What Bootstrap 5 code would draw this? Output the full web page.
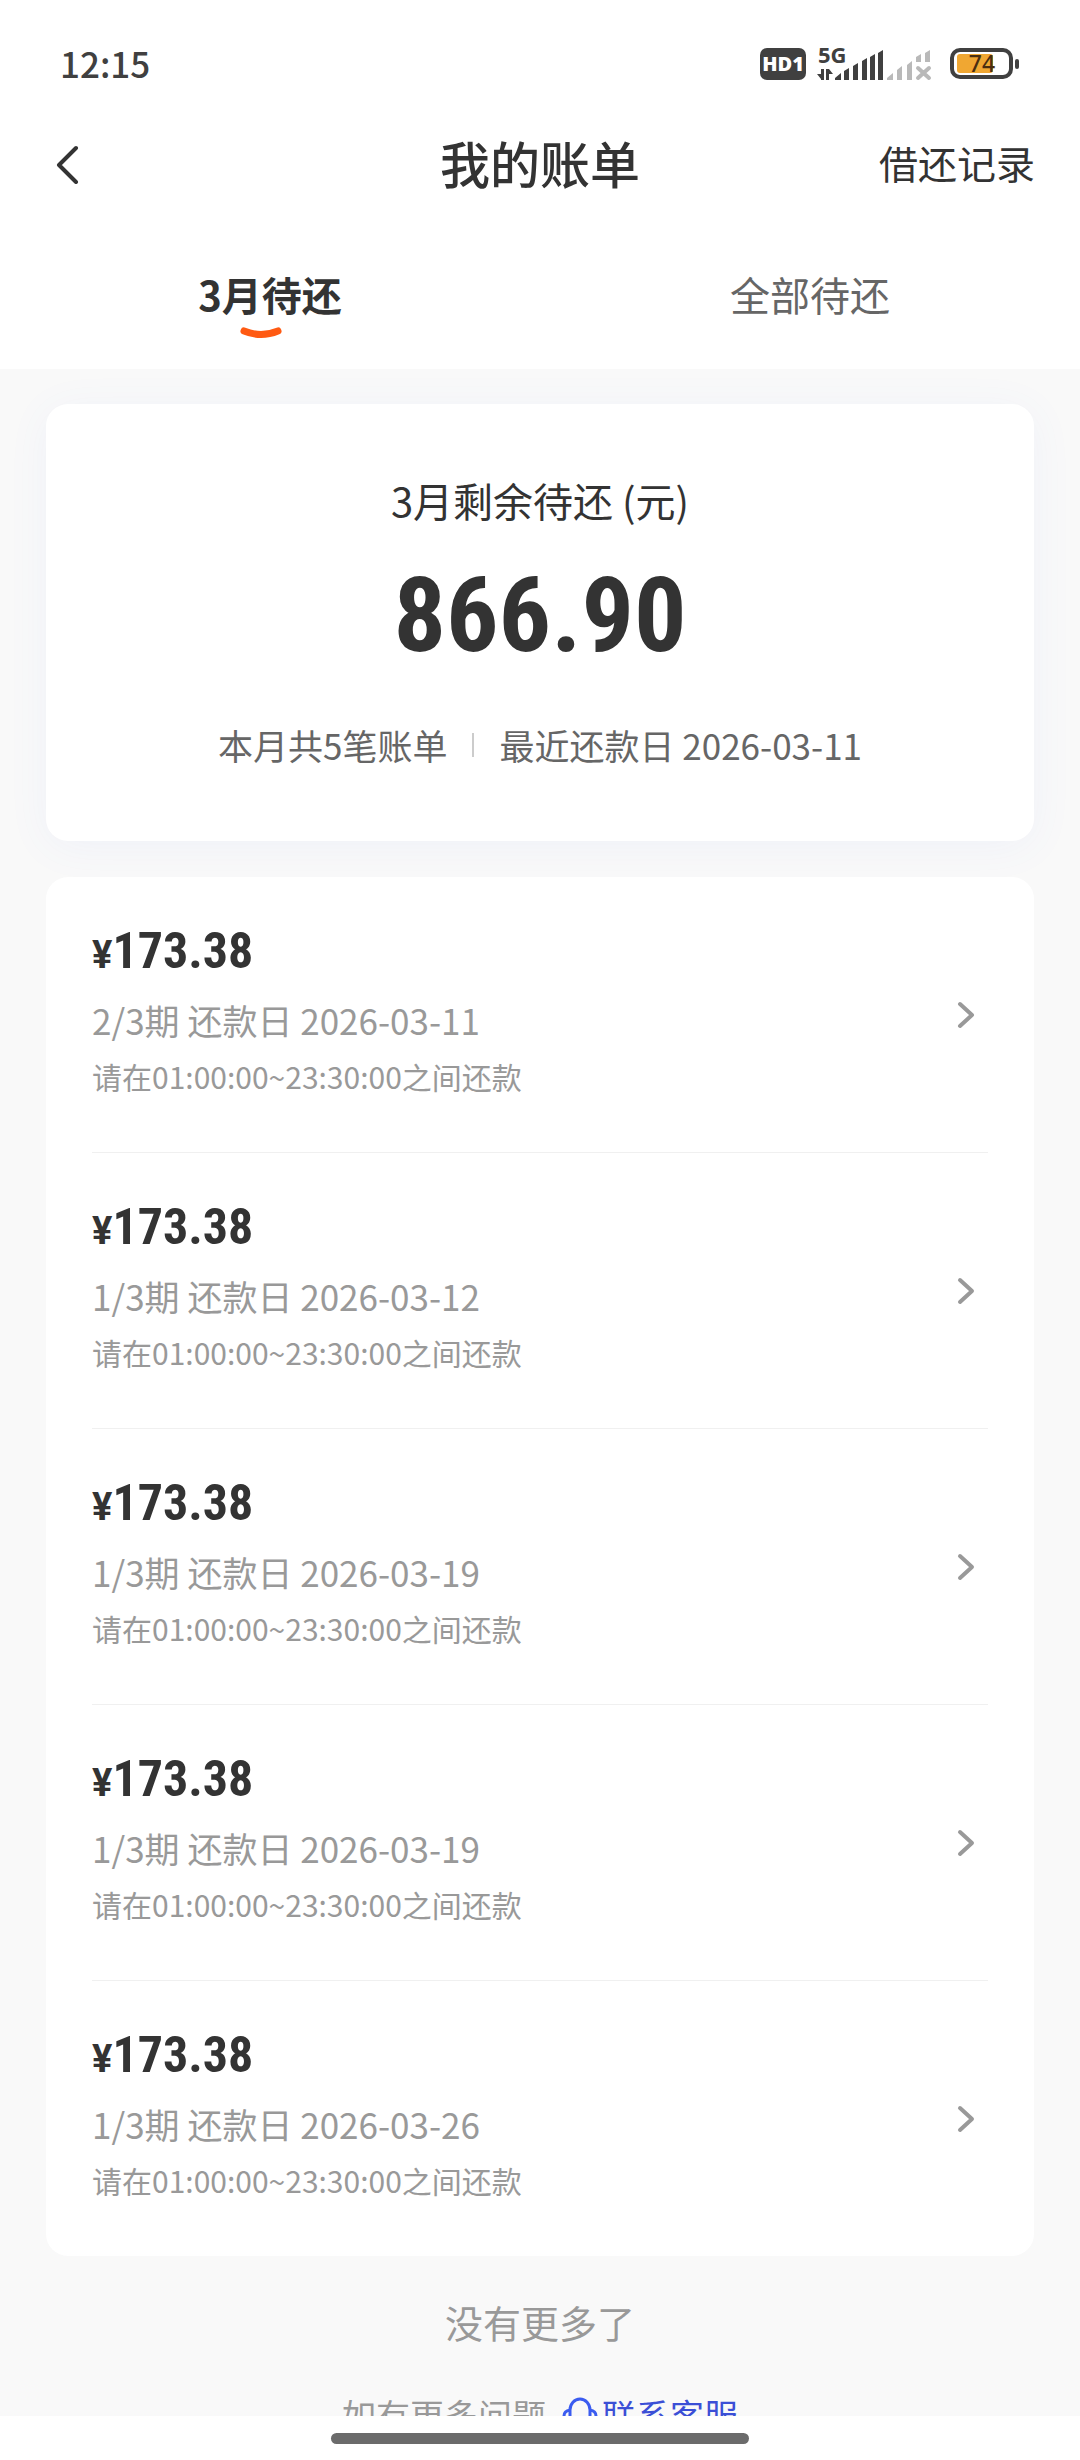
<!DOCTYPE html>
<html lang="zh-CN">
<head>
<meta charset="utf-8">
<meta name="viewport" content="width=device-width, initial-scale=1">
<title>我的账单</title>
<link href="https://cdn.jsdelivr.net/npm/bootstrap@5.3.0/dist/css/bootstrap.min.css" rel="stylesheet">
<style>
  body { font-family: "Noto Sans CJK SC", "Noto Sans", sans-serif; color: #333; background: #fff; }
  .screen { height: 100vh; }
  .text-main { color: #333; }
  .text-mid { color: #666; }
  .text-soft { color: #999; }
  .fs-title { font-size: 50px; line-height: 60px; font-weight: 500; }
  .fs-head { font-size: 40px; line-height: 60px; }
  .fs-info { font-size: 35px; line-height: 50px; }
  .fs-note { font-size: 30px; line-height: 44px; }

  .status-bar { height: 114px; padding: 14px 60px 0; }
  .clock { font-size: 35px; line-height: 50px; font-weight: 500; color: #404040; padding-bottom: 3px; }
  .status-icons { gap: 10px; }
  .status-icons svg { overflow: visible; }
  .title-bar { height: 100px; padding: 0 45px 4px; }
  .title-bar > * { flex: 1 1 0; }
  .title-bar .record-link { font-size: 39px; }
  .tab-row { padding: 50px 0 30px; }
  .tab-btn { height: 75px; background: none; border: 0; padding: 0; }
  .tab-btn svg { margin: 3px 18px 0 0; flex-shrink: 0; }

  .bill-area { background: #f9f9f9; min-height: 0; padding: 35px 46px 0; }
  .panel { background: #fff; border-radius: 22px; }
  .summary { padding: 66px 0 71px; box-shadow: 0 6px 44px rgba(90, 120, 230, .06); }
  .figures { font-family: "Roboto Condensed", "Roboto", sans-serif; font-weight: 700; }
  .total { font-size: 104px; line-height: 120px; margin: 26px 0 44px; }
  .info-split { width: 2px; height: 24px; background: #ccc; margin: 0 25px; }
  .bills { margin-top: 36px; padding: 0 46px; }
  .bill { border-color: #f0f0f0 !important; }
  .bill-text { padding: 44px 0 54px; }
  .amount { font-size: 50px; line-height: 60px; }
  .yuan { font-family: "Roboto", sans-serif; font-size: 38px; line-height: 1; }
  .due { margin: 14px 0 9px; }
  .bill svg { margin-right: 13px; }
  .no-more { font-size: 38px; line-height: 50px; margin: 41px 0 43px; }
  .help-line { font-size: 34px; line-height: 50px; }
  .service { color: #3b4fd6; }
  .home-bar { height: 44px; }
  .home-bar span { width: 418px; height: 11px; background: #6b6b6b; }
</style>
<script src="https://cdn.jsdelivr.net/npm/bootstrap@5.3.0/dist/js/bootstrap.bundle.min.js"></script>
</head>
<body>
<div class="screen d-flex flex-column overflow-hidden">
  <header class="flex-shrink-0">
    <div class="status-bar d-flex align-items-center justify-content-between">
      <span class="clock">12:15</span>
      <div class="status-icons d-flex align-items-center">
        <svg width="46" height="32" viewBox="0 0 46 32" role="img" aria-label="HD1">
          <rect width="46" height="32" rx="7" fill="#404040"/>
          <text x="23" y="23" text-anchor="middle" font-family="Open Sans, sans-serif" font-weight="800" font-size="20" fill="#fff">HD1</text>
        </svg>
        <svg width="116" height="34" viewBox="0 0 116 34" role="img" aria-label="5G">
          <text x="2" y="16" font-family="Open Sans, sans-serif" font-weight="700" font-size="22" fill="#404040">5G</text>
          <g fill="#404040">
            <path d="M5 22h3v11H5zM1 27h4v5zM10 22h3v11h-3zM13 22l4 5h-4z"/>
            <path d="M19 33v-2l6-5v7zM28 33v-9l5-3v12zM37 33V19l5-3v17zM46 33V14l5-3v22zM54 33V10l5-3v26zM62 33V6l5-3v30z"/>
          </g>
          <g fill="#b9b9b9">
            <path d="M71 33v-2l6-5v7zM81 33V23l5-4v14zM91 33V18l5-4v19zM100 15v-5l5-3v8zM109 15V6l5-3v12z"/>
            <path d="M102 21l11 10M113 21l-11 10" stroke="#b9b9b9" stroke-width="4" stroke-linecap="round"/>
          </g>
        </svg>
        <svg class="ms-2" width="70" height="32" viewBox="0 0 70 32" role="img" aria-label="74">
          <rect x="2" y="2" width="59" height="27" rx="8" fill="none" stroke="#404040" stroke-width="4"/>
          <rect x="7" y="6" width="36" height="19" rx="3" fill="#f0a732"/>
          <rect x="65" y="11" width="4" height="10" rx="2" fill="#404040"/>
          <text x="32" y="24" text-anchor="middle" font-family="Noto Sans, sans-serif" font-weight="500" font-size="23" fill="#4a2e10">74</text>
        </svg>
      </div>
    </div>
    <div class="title-bar d-flex align-items-center">
      <div class="d-flex">
        <button type="button" class="btn p-0 border-0 d-flex" aria-label="返回">
          <svg width="42" height="44" viewBox="0 0 42 44" fill="none" stroke="#333" stroke-width="4" stroke-linecap="round" stroke-linejoin="round"><path d="M31 8L14 25L31 42"/></svg>
        </button>
      </div>
      <h1 class="fs-title text-center text-nowrap m-0">我的账单</h1>
      <div class="text-end"><a href="#" class="record-link text-main text-decoration-none">借还记录</a></div>
    </div>
    <nav class="tab-row d-flex">
      <button type="button" class="tab-btn fs-head w-50 fw-bold text-main d-flex flex-column align-items-center" aria-current="page">3月待还
        <svg width="42" height="12" viewBox="0 0 42 12" fill="none" stroke="#ff5a12" stroke-width="7" stroke-linecap="round"><path d="M4 4Q21 11 38 4"/></svg>
      </button>
      <button type="button" class="tab-btn fs-head w-50 text-mid d-flex flex-column align-items-center">全部待还</button>
    </nav>
  </header>

  <main class="bill-area flex-fill overflow-hidden">
    <section class="panel summary text-center">
      <div class="fs-head">3月剩余待还 (元)</div>
      <div class="figures total">866.90</div>
      <div class="fs-info text-mid d-flex justify-content-center align-items-center">
        <span>本月共5笔账单</span><span class="info-split"></span><span>最近还款日 2026-03-11</span>
      </div>
    </section>

    <section class="panel bills">
      <a href="#" class="bill border-bottom d-flex align-items-center justify-content-between text-decoration-none">
        <div class="bill-text">
          <div class="figures amount text-main"><span class="yuan">¥</span>173.38</div>
          <div class="fs-info due text-soft">2/3期 还款日 2026-03-11</div>
          <div class="fs-note text-soft">请在01:00:00~23:30:00之间还款</div>
        </div>
        <svg width="18" height="28" viewBox="0 0 18 28" fill="none" stroke="#999" stroke-width="4" stroke-linecap="round" stroke-linejoin="round"><path d="M3 3L15 14L3 25"/></svg>
      </a>
      <a href="#" class="bill border-bottom d-flex align-items-center justify-content-between text-decoration-none">
        <div class="bill-text">
          <div class="figures amount text-main"><span class="yuan">¥</span>173.38</div>
          <div class="fs-info due text-soft">1/3期 还款日 2026-03-12</div>
          <div class="fs-note text-soft">请在01:00:00~23:30:00之间还款</div>
        </div>
        <svg width="18" height="28" viewBox="0 0 18 28" fill="none" stroke="#999" stroke-width="4" stroke-linecap="round" stroke-linejoin="round"><path d="M3 3L15 14L3 25"/></svg>
      </a>
      <a href="#" class="bill border-bottom d-flex align-items-center justify-content-between text-decoration-none">
        <div class="bill-text">
          <div class="figures amount text-main"><span class="yuan">¥</span>173.38</div>
          <div class="fs-info due text-soft">1/3期 还款日 2026-03-19</div>
          <div class="fs-note text-soft">请在01:00:00~23:30:00之间还款</div>
        </div>
        <svg width="18" height="28" viewBox="0 0 18 28" fill="none" stroke="#999" stroke-width="4" stroke-linecap="round" stroke-linejoin="round"><path d="M3 3L15 14L3 25"/></svg>
      </a>
      <a href="#" class="bill border-bottom d-flex align-items-center justify-content-between text-decoration-none">
        <div class="bill-text">
          <div class="figures amount text-main"><span class="yuan">¥</span>173.38</div>
          <div class="fs-info due text-soft">1/3期 还款日 2026-03-19</div>
          <div class="fs-note text-soft">请在01:00:00~23:30:00之间还款</div>
        </div>
        <svg width="18" height="28" viewBox="0 0 18 28" fill="none" stroke="#999" stroke-width="4" stroke-linecap="round" stroke-linejoin="round"><path d="M3 3L15 14L3 25"/></svg>
      </a>
      <a href="#" class="bill d-flex align-items-center justify-content-between text-decoration-none">
        <div class="bill-text">
          <div class="figures amount text-main"><span class="yuan">¥</span>173.38</div>
          <div class="fs-info due text-soft">1/3期 还款日 2026-03-26</div>
          <div class="fs-note text-soft">请在01:00:00~23:30:00之间还款</div>
        </div>
        <svg width="18" height="28" viewBox="0 0 18 28" fill="none" stroke="#999" stroke-width="4" stroke-linecap="round" stroke-linejoin="round"><path d="M3 3L15 14L3 25"/></svg>
      </a>
    </section>

    <p class="no-more text-soft text-center">没有更多了</p>
    <div class="help-line text-soft d-flex justify-content-center">
      <span class="me-3">如有更多问题</span>
      <a href="#" class="service d-flex align-items-center text-decoration-none">
        <svg class="me-1" width="36" height="36" viewBox="0 0 36 36" fill="none" stroke="#3b5cf0" stroke-width="3" stroke-linecap="round"><path d="M8 24V13a10 11 0 0 1 20 0v11M8 13q-6 1-6 6t6 5M28 13q6 1 6 6t-6 5q0 8-8 8"/></svg>联系客服</a>
    </div>
  </main>

  <footer class="home-bar flex-shrink-0 d-flex justify-content-center align-items-center bg-white">
    <span class="rounded-pill"></span>
  </footer>
</div>
</body>
</html>
